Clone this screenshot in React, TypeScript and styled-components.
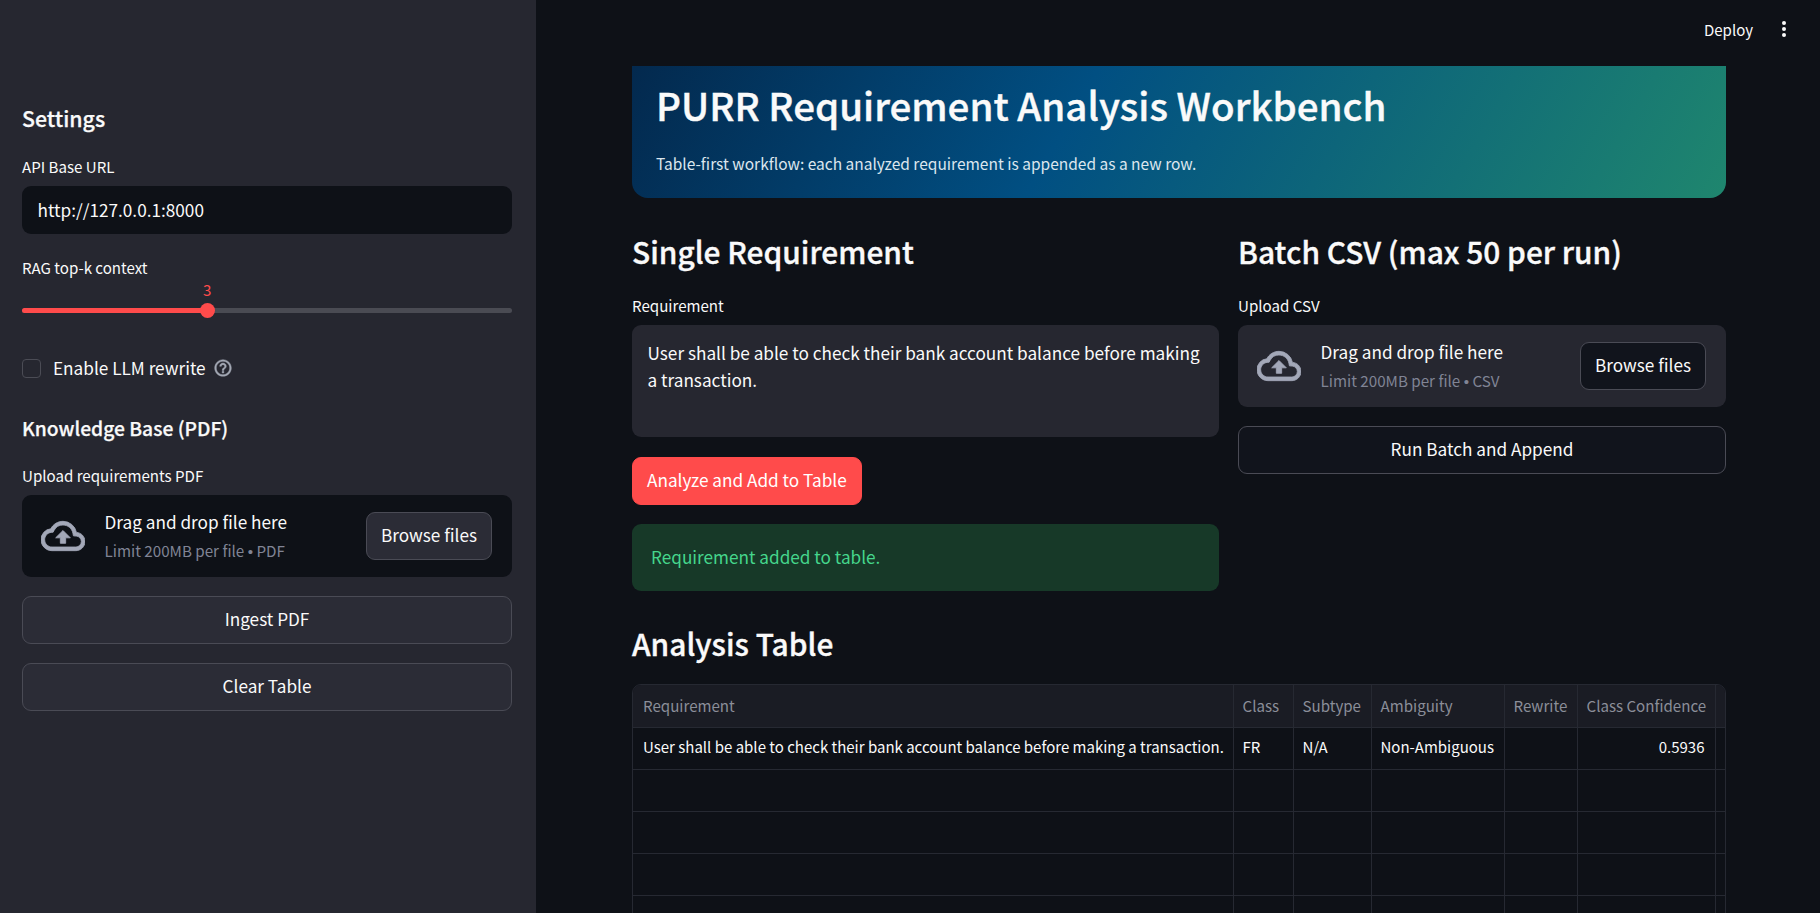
import { ReactElement } from "react"

import { MdOutlineCloudUpload, MdOutlineHelpOutline } from "react-icons/md"
import styled, { createGlobalStyle } from "styled-components"

const GlobalStyle = createGlobalStyle`
  html, body, #root {
    margin: 0;
    height: 100%;
  }

  body {
    background: #0e1117;
    color: #fafafa;
    font-family: "Noto Sans CJK SC", "Open Sans", sans-serif;
    font-size: 17.2px;
    overflow: hidden;
  }

  * {
    box-sizing: border-box;
  }
`

const Page = styled.div`
  display: flex;
  width: 100%;
  height: 100vh;
  overflow: hidden;
`

const Sidebar = styled.aside`
  display: flex;
  flex-direction: column;
  flex: none;
  width: 536px;
  padding: 104px 24px 0 22px;
  background: #262730;
`

const Main = styled.main`
  flex: 1;
  min-width: 0;
  padding: 0 94px 0 96px;
`

const TopBar = styled.header`
  display: flex;
  align-items: center;
  justify-content: flex-end;
  gap: 29px;
  height: 66px;
  margin-right: -94px;
  padding: 0 34px 8px 0;
  font-size: 15px;
`

const MenuDots = styled.span`
  display: flex;
  flex-direction: column;
  gap: 2.2px;

  i {
    width: 4px;
    height: 4px;
    border-radius: 50%;
    background: #fafafa;
  }
`

const SideHeading = styled.h3<{ $top?: number; $size?: number }>`
  height: 30px;
  margin: ${(p) => p.$top ?? 0}px 0 0;
  font-size: ${(p) => p.$size ?? 19.25}px;
  font-weight: 500;
  line-height: 28px;
  -webkit-text-stroke: 0.25px;
`

const Label = styled.label<{ $top?: number }>`
  display: block;
  height: 20px;
  margin: ${(p) => p.$top ?? 0}px 0 9px;
  font-size: 15.1px;
  line-height: 18px;
`

const TextInput = styled.input`
  display: block;
  width: 100%;
  height: 48px;
  padding: 0 15.5px 2px;
  border: 0;
  border-radius: 9px;
  outline: none;
  background: #0e1117;
  color: #fafafa;
  font: inherit;
`

const SliderBlock = styled.div`
  position: relative;
  height: 38px;
  margin-top: -8px;
`

const SliderValue = styled.span`
  position: absolute;
  top: 1px;
  left: 37.8%;
  transform: translateX(-50%);
  color: #ff4b4b;
  font-size: 15.1px;
  line-height: 18px;
`

const SliderTrack = styled.div`
  position: absolute;
  left: 0;
  right: 0;
  top: 29px;
  height: 5px;
  border-radius: 3px;
  background: #4a4b53;
`

const SliderFill = styled.div`
  height: 100%;
  border-radius: 3px;
  background: #ff4b4b;
`

const SliderThumb = styled.span`
  position: absolute;
  top: -5px;
  width: 15px;
  height: 15px;
  margin-left: -7.5px;
  border-radius: 50%;
  background: #ff4b4b;
`

const CheckRow = styled.div`
  display: flex;
  align-items: center;
  height: 20px;
  margin-top: 41px;
`

const CheckBox = styled.span`
  flex: none;
  width: 19px;
  height: 19px;
  margin-right: 12px;
  border: 1px solid #4b4c55;
  border-radius: 4px;
  background: #262730;
`

const CheckText = styled.span`
  padding-bottom: 2px;
`

const HelpIcon = styled(MdOutlineHelpOutline)`
  margin-left: 7px;
  color: #a3a8b4;

  path:not([fill="none"]) {
    stroke-width: 0.5px;
  }
`

const Uploader = styled.div<{ $panel?: boolean }>`
  display: flex;
  align-items: center;
  height: 82px;
  padding: 0 20px 0 19px;
  border-radius: 9px;
  background: ${(p) => (p.$panel ? "#262730" : "#0e1117")};
`

const CloudIcon = styled(MdOutlineCloudUpload)`
  flex: none;
  margin-right: 19.5px;
  color: #a3a8b8;

  path:not([fill="none"]) {
    stroke-width: 0.45px;
  }
`

const DropText = styled.div`
  flex: 1;
  min-width: 0;
  padding-top: 1px;
`

const DropTitle = styled.div`
  margin-bottom: 3px;
  line-height: 26px;
`

const DropHint = styled.div`
  color: #808495;
  font-size: 15.2px;
  line-height: 24px;

  span {
    font-family: "Liberation Sans", sans-serif;
  }
`

const Button = styled.button<{ $tone?: string; $fill?: boolean }>`
  display: block;
  flex: none;
  width: ${(p) => (p.$fill ? "100%" : "auto")};
  height: 48px;
  padding: 0 14px 4px;
  border: 1px solid #4a4b55;
  border-radius: 9px;
  background: ${(p) => p.$tone ?? "#2b2c36"};
  color: #fafafa;
  font: inherit;
  white-space: nowrap;
`

const PrimaryButton = styled(Button)`
  margin-top: 20px;
  border-color: #ff4b4b;
  background: #ff4b4b;
  color: #fff;
`

const SideButtons = styled.div`
  display: flex;
  flex-direction: column;
  gap: 19px;
  margin-top: 19px;
`

const Banner = styled.section`
  height: 132px;
  padding: 14px 24px 0;
  border-radius: 0 0 16px 16px;
  background: linear-gradient(120deg, #03294e 0%, #014f82 40%, #1f866e 100%);
`

const BannerTitle = styled.h1`
  margin: 0;
  font-size: 38.5px;
  font-weight: 500;
  line-height: 48px;
  -webkit-text-stroke: 0.4px;
`

const BannerText = styled.p`
  margin: 23px 0 0;
  color: #dce6ee;
  font-size: 15.5px;
  line-height: 24px;
`

const Columns = styled.div`
  display: grid;
  grid-template-columns: 587fr 488fr;
  gap: 19px;
  margin-top: 33px;
`

const Column = styled.div`
  display: flex;
  flex-direction: column;
  align-items: flex-start;

  & > * {
    flex: none;
  }
`

const Wide = styled.div`
  width: 100%;
`

const RunButton = styled(Button)`
  margin-top: 19px;
`

const SectionHeading = styled.h2<{ $top?: number }>`
  height: 44px;
  margin: ${(p) => p.$top ?? 0}px 0 0;
  font-size: 29.9px;
  font-weight: 500;
  line-height: 40px;
  -webkit-text-stroke: 0.35px;
`

const TextArea = styled.textarea`
  display: block;
  width: 100%;
  height: 112px;
  padding: 14px 15.5px;
  border: 0;
  border-radius: 9px;
  outline: none;
  resize: none;
  background: #262730;
  color: #fafafa;
  font: inherit;
  line-height: 27px;
`

const Success = styled.div`
  width: 100%;
  height: 67px;
  margin-top: 19px;
  padding: 0 19px;
  border-radius: 9px;
  background: #173928;
  color: #45d68c;
  line-height: 66px;
`

const TableFrame = styled.div`
  margin-top: 17px;
  border: 1px solid #262932;
  border-radius: 9px 9px 0 0;
  overflow: hidden;
`

const Table = styled.table`
  width: 100%;
  border-collapse: collapse;
  table-layout: fixed;
  font-size: 15.1px;
`

const HeadCell = styled.th`
  height: 42px;
  padding: 0 10px 2px 9px;
  border: 1px solid #262932;
  border-width: 0 1px 1px 0;
  background: #1a1c24;
  color: #8b8e99;
  font-weight: 400;
  text-align: left;
  white-space: nowrap;
  overflow: hidden;

  &:first-child {
    padding-left: 10px;
  }
`

const Cell = styled.td<{ $right?: boolean }>`
  height: 42px;
  padding: 0 10px 3px 9px;
  border: 1px solid #262932;
  border-width: 0 1px 1px 0;
  font-size: 15px;
  text-align: ${(p) => (p.$right ? "right" : "left")};
  white-space: nowrap;
  overflow: hidden;

  &:first-child {
    padding-left: 10px;
  }
`

const columns = [
  { name: "Requirement", width: 600 },
  { name: "Class", width: 60 },
  { name: "Subtype", width: 78 },
  { name: "Ambiguity", width: 133 },
  { name: "Rewrite", width: 73 },
  { name: "Class Confidence", width: 138 },
  { name: "", width: 10 },
]

const firstRow = [
  "User shall be able to check their bank account balance before making a transaction.",
  "FR",
  "N/A",
  "Non-Ambiguous",
  "",
  "0.5936",
  "",
]

function FileDrop({ kind, panel, tone }: { kind: string; panel?: boolean; tone: string }): ReactElement {
  return (
    <Uploader $panel={panel}>
      <CloudIcon size={44} />
      <DropText>
        <DropTitle>Drag and drop file here</DropTitle>
        <DropHint>
          Limit 200MB per file <span>•</span> {kind}
        </DropHint>
      </DropText>
      <Button $tone={tone}>Browse files</Button>
    </Uploader>
  )
}

function App(): ReactElement {
  return (
    <Page>
      <GlobalStyle />
      <Sidebar>
        <SideHeading $size={21.3}>Settings</SideHeading>
        <Label $top={23}>API Base URL</Label>
        <TextInput readOnly value="http://127.0.0.1:8000" />
        <Label $top={24}>RAG top-k context</Label>
        <SliderBlock>
          <SliderValue>3</SliderValue>
          <SliderTrack>
            <SliderFill style={{ width: "37.8%" }} />
            <SliderThumb style={{ left: "37.8%" }} />
          </SliderTrack>
        </SliderBlock>
        <CheckRow>
          <CheckBox />
          <CheckText>Enable LLM rewrite</CheckText>
          <HelpIcon size={20} />
        </CheckRow>
        <SideHeading $top={36}>Knowledge Base (PDF)</SideHeading>
        <Label $top={22}>Upload requirements PDF</Label>
        <FileDrop kind="PDF" tone="#2b2c36" />
        <SideButtons>
          <Button $fill>Ingest PDF</Button>
          <Button $fill>Clear Table</Button>
        </SideButtons>
      </Sidebar>
      <Main>
        <TopBar>
          Deploy
          <MenuDots>
            <i />
            <i />
            <i />
          </MenuDots>
        </TopBar>
        <Banner>
          <BannerTitle>PURR Requirement Analysis Workbench</BannerTitle>
          <BannerText>Table-first workflow: each analyzed requirement is appended as a new row.</BannerText>
        </Banner>
        <Columns>
          <Column>
            <SectionHeading>Single Requirement</SectionHeading>
            <Label $top={21}>Requirement</Label>
            <TextArea
              readOnly
              value="User shall be able to check their bank account balance before making a transaction."
            />
            <PrimaryButton>Analyze and Add to Table</PrimaryButton>
            <Success>Requirement added to table.</Success>
          </Column>
          <Column>
            <SectionHeading>Batch CSV (max 50 per run)</SectionHeading>
            <Label $top={21}>Upload CSV</Label>
            <Wide>
              <FileDrop kind="CSV" panel tone="#11141c" />
            </Wide>
            <Wide>
              <RunButton $fill $tone="#11141c">
                Run Batch and Append
              </RunButton>
            </Wide>
          </Column>
        </Columns>
        <SectionHeading $top={32}>Analysis Table</SectionHeading>
        <TableFrame>
          <Table>
            <colgroup>
              {columns.map((column, i) => (
                <col key={i} style={{ width: column.width }} />
              ))}
            </colgroup>
            <thead>
              <tr>
                {columns.map((column, i) => (
                  <HeadCell key={i}>{column.name}</HeadCell>
                ))}
              </tr>
            </thead>
            <tbody>
              <tr>
                {firstRow.map((text, i) => (
                  <Cell key={i} $right={i === 5}>
                    {text}
                  </Cell>
                ))}
              </tr>
              {[0, 1, 2, 3].map((row) => (
                <tr key={row}>
                  {columns.map((_, i) => (
                    <Cell key={i} />
                  ))}
                </tr>
              ))}
            </tbody>
          </Table>
        </TableFrame>
      </Main>
    </Page>
  )
}

export default App
